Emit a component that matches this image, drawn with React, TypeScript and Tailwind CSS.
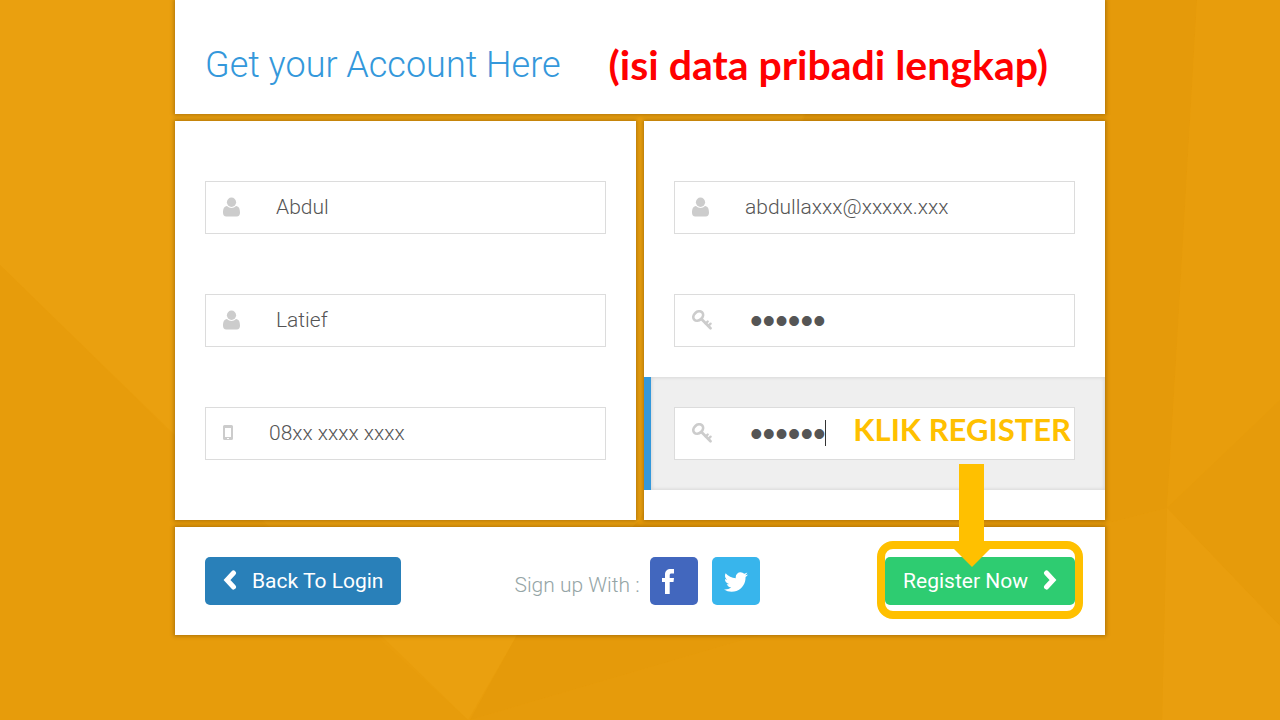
import React from "react";

function Glyph({ d, box, className }: { d: string; box: string; className: string }) {
  return (
    <svg viewBox={box} className={className} fill="currentColor" aria-hidden="true">
      <path d={d} />
    </svg>
  );
}

const TWITTER =
  "M1684 408q-67 98-162 167 1 14 1 42 0 130-38 259.5t-115.5 248.5-184.5 210.5-258 146-323 54.5q-271 0-496-145 35 4 78 4 225 0 401-138-105-2-188-64.5t-114-159.5q33 5 61 5 43 0 85-11-112-23-185.5-111.5t-73.5-205.5v-4q68 38 146 41-66-44-105-115t-39-154q0-88 44-163 121 149 294.5 238.5t371.5 99.5q-8-38-8-74 0-134 94.5-228.5t228.5-94.5q140 0 236 102 109-21 205-78-37 115-142 178 93-10 186-50z";

const FACEBOOK =
  "M12 0V4.600H9.600C8.200 4.600 7.700 5.200 7.700 6.500V9H12L11.500 13H7.700V25H3V13H0V9H3V5.700C3 2 5.200 0 8.800 0z";

const UserIcon = () => (
  <svg viewBox="0 0 17 20" className="mb-0.5 h-5 w-[17px] shrink-0" fill="currentColor" aria-hidden="true">
    <ellipse cx="8.5" cy="5.200" rx="4.600" ry="4.700" />
    <path d="M4 9C5.200 10.300 6.800 11 8.500 11S11.800 10.300 13 9C16 9.400 17 12 17 15.800C17 18.200 15.800 19.500 13.800 19.500H3.200C1.200 19.500 0 18.200 0 15.800C0 12 1 9.400 4 9z" />
  </svg>
);

const KeyIcon = () => (
  <svg
    viewBox="0 0 20 20"
    className="mb-0.5 size-5 shrink-0"
    fill="none"
    stroke="currentColor"
    strokeWidth="2.700"
    strokeLinecap="round"
    aria-hidden="true"
  >
    <ellipse cx="6.200" cy="6" rx="5.300" ry="4.200" transform="rotate(-42 6.200 6)" />
    <path d="M9.700 9.300L18.500 18.300" />
    <path d="M13.800 13.400L15.700 11.500M16.600 15.600L18.600 13.600" strokeWidth="2.300" />
  </svg>
);

const MobileIcon = () => (
  <Glyph
    d="M1.5 0h7A1.5 1.5 0 0 1 10 1.500v12A1.500 1.500 0 0 1 8.500 15h-7A1.500 1.500 0 0 1 0 13.500v-12A1.500 1.500 0 0 1 1.500 0zM2 3v9h6V3zM4 13v1h2v-1z"
    box="0 0 10 15"
    className="mb-0.5 h-[15px] w-[10px] shrink-0 [fill-rule:evenodd]"
  />
);

function Chevron({ d }: { d: string }) {
  return (
    <svg
      viewBox="0 0 14 20"
      className="mb-0.5 h-5 w-[14px] shrink-0"
      fill="none"
      stroke="currentColor"
      strokeWidth="5"
      strokeLinecap="round"
      aria-hidden="true"
    >
      <path d={d} />
    </svg>
  );
}

type FieldProps = {
  id: string;
  label: string;
  value: string;
  icon: React.ReactNode;
  type?: string;
  active?: boolean;
};

function Field({ id, label, value, icon, type = "text", active = false }: FieldProps) {
  return (
    <div
      className={
        active
          ? "relative border-l-[7px] border-[#3498db] bg-[#efefef] py-[30px] pr-[30px] pl-[23px] shadow-[inset_0_0_4px_rgba(0,0,0,0.14)]"
          : "relative px-[30px] py-[30px]"
      }
    >
      <div className="flex h-[53px] items-center gap-9 border border-[#dcdcdc] bg-white pl-[17px] text-[#cccccc]">
        <label htmlFor={id} className="flex" aria-label={label}>
          {icon}
        </label>
        <input
          id={id}
          type={type}
          aria-label={label}
          defaultValue={value}
          className={
            type === "password"
              ? "h-full min-w-0 flex-1 bg-transparent pl-0.5 font-['Liberation_Sans',sans-serif] text-[36px] text-[#555555] outline-none"
              : "h-full min-w-0 flex-1 bg-transparent pb-px text-[21px] font-light text-[#555555] outline-none"
          }
        />
      </div>
      {active && (
        <>
          <span className="absolute top-[43px] left-[174px] h-[26px] w-px bg-[#333333]" />
          <span className="absolute top-8 right-[34px] font-['Lato',sans-serif] text-[31px] leading-10 font-bold whitespace-nowrap text-[#ffc000]">
            KLIK REGISTER
          </span>
        </>
      )}
    </div>
  );
}

function Backdrop() {
  return (
    <svg
      viewBox="0 0 1280 720"
      preserveAspectRatio="none"
      className="absolute inset-0 -z-10 size-full"
      aria-hidden="true"
    >
      <rect width="1280" height="720" fill="#e89d0c" />
      <path d="M0 0H850L640 520L517 635L468 720L0 265z" fill="#eaa00f" />
      <path d="M0 265L170 432L375 635L468 720H0z" fill="#e79c0b" />
      <path d="M850 0H1197L1176 360L1167 508L1105 524L760 635L470 720L517 635L640 520L805 116z" fill="#e59a0a" />
      <path d="M1197 0H1280V400L1167 508L1176 360z" fill="#e89d0c" />
      <path d="M1280 400V626L1167 508z" fill="#e69b0b" />
      <path d="M1167 508L1280 626V720H1162z" fill="#e99e0e" />
      <path d="M1105 524L1167 508L1162 720H470L760 635z" fill="#e69b0b" />
    </svg>
  );
}

const panel = "bg-white shadow-[0_0_4px_1px_rgba(80,50,0,0.4)]";

export default function App() {
  return (
    <div className="relative isolate min-h-screen overflow-hidden bg-[#e89d0c] font-['Roboto',sans-serif]">
      <Backdrop />
      <form className="mx-auto flex max-w-[930px] flex-col gap-[7px]" onSubmit={(e) => e.preventDefault()}>
        <header className={`${panel} flex h-[114px] items-center gap-12 px-[30px] pt-4`}>
          <h1 className="text-[36px] font-light whitespace-nowrap text-[#3498db]">Get your Account Here</h1>
          <p className="font-['Lato',sans-serif] text-[41px] font-bold whitespace-nowrap text-[#ff0000]">
            (isi data pribadi lengkap)
          </p>
        </header>

        <div className="grid grid-cols-2 gap-2">
          <section className={`${panel} py-[30px]`}>
            <Field id="first" label="First name" value="Abdul" icon={<UserIcon />} />
            <Field id="last" label="Last name" value="Latief" icon={<UserIcon />} />
            <Field id="phone" label="Phone" value="08xx xxxx xxxx" icon={<MobileIcon />} />
          </section>
          <section className={`${panel} py-[30px]`}>
            <Field id="email" label="Email" value="abdullaxxx@xxxxx.xxx" icon={<UserIcon />} />
            <Field id="password" label="Password" value="xxxxxx" type="password" icon={<KeyIcon />} />
            <Field id="confirm" label="Confirm password" value="xxxxxx" type="password" icon={<KeyIcon />} active />
          </section>
        </div>

        <footer className={`${panel} flex items-center p-[30px] text-[21px] leading-8`}>
          <button
            type="button"
            className="flex h-12 items-center gap-[15px] rounded-[5px] bg-[#2980b9] px-[18px] whitespace-nowrap text-white"
          >
            <Chevron d="M10.500 3L4 10l6.500 7" />
            Back To Login
          </button>
          <div className="ml-[113px] flex items-center">
            <span className="pt-2 font-light whitespace-nowrap text-[#95a5a6]">Sign up With :</span>
            <a
              href="#facebook"
              aria-label="Facebook"
              className="ml-[10px] flex size-12 items-center rounded-[5px] bg-[#4267be] pl-3 text-white"
            >
              <Glyph d={FACEBOOK} box="0 0 12 25" className="h-[25px] w-3" />
            </a>
            <a
              href="#twitter"
              aria-label="Twitter"
              className="ml-[14px] flex size-12 items-center justify-center rounded-[5px] bg-[#38b5ec] pt-0.5 text-white"
            >
              <Glyph d={TWITTER} box="108 256 1576 1280" className="h-5 w-6" />
            </a>
          </div>
          <div className="relative ml-auto">
            <button
              type="submit"
              className="flex h-12 items-center gap-[15px] rounded-[5px] bg-[#2ecc71] px-[18px] whitespace-nowrap text-white"
            >
              Register Now
              <Chevron d="M3.500 3l6.500 7l-6.500 7" />
            </button>
            <span className="pointer-events-none absolute -inset-x-2 -top-4 -bottom-[14px] rounded-[16px] border-8 border-[#ffc000]" />
            <svg
              viewBox="0 0 48 103"
              className="pointer-events-none absolute bottom-[38px] left-[63px] h-[103px] w-12"
              fill="#ffc000"
              aria-hidden="true"
            >
              <path d="M11 0h25v79h12L24 103L0 79h11z" />
            </svg>
          </div>
        </footer>
      </form>
    </div>
  );
}
